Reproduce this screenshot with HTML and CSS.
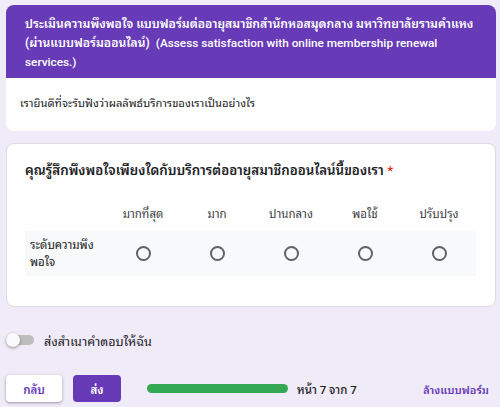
FILE: index.html
```html
<!DOCTYPE html>
<html lang="th">
<head>
<meta charset="utf-8">
<link rel="stylesheet" href="styles.css">
</head>
<body>
<div class="page">
  <div class="card header-card">
    <div class="header-top">
      <span class="line">ประเมินความพึงพอใจ แบบฟอร์มต่ออายุสมาชิกสำนักหอสมุดกลาง มหาวิทยาลัยรามคำแหง</span>
      <span class="line">(ผ่านแบบฟอร์มออนไลน์)&nbsp; <span class="en">(Assess satisfaction with online membership renewal</span></span>
      <span class="line"><span class="en">services.)</span></span>
    </div>
    <div class="header-desc">เรายินดีที่จะรับฟังว่าผลลัพธ์บริการของเราเป็นอย่างไร</div>
  </div>

  <div class="card question-card">
    <div class="q-title">คุณรู้สึกพึงพอใจเพียงใดกับบริการต่ออายุสมาชิกออนไลน์นี้ของเรา <span class="req">*</span></div>
    <div class="grid">
      <div class="grid-head">
        <div class="cell label-cell"></div>
        <div class="cell">มากที่สุด</div>
        <div class="cell">มาก</div>
        <div class="cell">ปานกลาง</div>
        <div class="cell">พอใช้</div>
        <div class="cell">ปรับปรุง</div>
      </div>
      <div class="grid-row">
        <div class="cell label-cell">ระดับความพึงพอใจ</div>
        <div class="cell"><span class="radio"></span></div>
        <div class="cell"><span class="radio"></span></div>
        <div class="cell"><span class="radio"></span></div>
        <div class="cell"><span class="radio"></span></div>
        <div class="cell"><span class="radio"></span></div>
      </div>
    </div>
  </div>

  <div class="copy-row">
    <span class="toggle"><span class="knob"></span></span>
    <span class="copy-label">ส่งสำเนาคำตอบให้ฉัน</span>
  </div>

  <div class="footer">
    <button class="btn btn-back">กลับ</button>
    <button class="btn btn-send">ส่ง</button>
    <div class="progress"><div class="progress-fill"></div></div>
    <span class="page-count">หน้า 7 จาก 7</span>
    <span class="clear">ล้างแบบฟอร์ม</span>
  </div>
</div>
</body>
</html>
```

FILE: styles.css
```css
* { box-sizing: border-box; }
html, body { margin: 0; padding: 0; }
body {
  background: #f0ebf8;
  font-family: Roboto, "Noto Sans Thai Looped", "Noto Sans Thai", sans-serif;
  color: #202124;
  width: 500px;
  height: 407px;
  overflow: hidden;
}
.page {
  padding: 5px 4px 0 6px;
}
.card {
  background: #fff;
  border-radius: 8px;
  border: 1px solid #dadce0;
  overflow: hidden;
}
.header-card { border: none; }
.header-top {
  background: #673ab7;
  color: #fff;
  font-size: 12.1px;
  font-weight: 600;
  line-height: 19px;
  padding: 10px 4px 6px 19px;
}
.line {
  display: block;
  white-space: nowrap;
}
.en {
  font-size: 11.8px;
  font-weight: 500;
}
.header-desc {
  font-size: 11.2px;
  line-height: 16px;
  padding: 18px 14px 19px 14px;
}
.question-card {
  margin-top: 12px;
  padding: 17px 19px 29px 18px;
  height: 164px;
}
.q-title {
  font-size: 13.3px;
  font-weight: 600;
  line-height: 20px;
}
.req { color: #d93025; }
.grid { margin-top: 23px; }
.grid-head, .grid-row {
  display: grid;
  grid-template-columns: 81px repeat(5, 74px);
}
.grid-head {
  font-size: 11.5px;
  color: #3c4043;
  height: 18px;
  align-items: center;
}
.grid-row {
  margin-top: 9px;
  background: #f8f9fa;
  height: 45px;
  align-items: center;
}
.cell {
  text-align: center;
  display: flex;
  justify-content: center;
  align-items: center;
}
.label-cell {
  justify-content: flex-start;
  text-align: left;
  font-size: 11.5px;
  line-height: 17px;
  padding-left: 5px;
  padding-right: 8px;
}
.radio {
  width: 15px;
  height: 15px;
  border: 2px solid #5f6368;
  border-radius: 50%;
  display: block;
}
.copy-row {
  display: flex;
  align-items: center;
  margin-top: 23px;
  height: 20px;
}
.toggle {
  position: relative;
  width: 28px;
  height: 10px;
  border-radius: 5px;
  background: #bdbdbd;
  display: block;
}
.knob {
  position: absolute;
  left: 0;
  top: -2px;
  width: 14px;
  height: 14px;
  border-radius: 50%;
  background: #fafafa;
  box-shadow: 0 1px 3px rgba(0,0,0,0.4);
}
.copy-label {
  margin-left: 10px;
  font-size: 12.5px;
}
.footer {
  display: flex;
  align-items: center;
  margin-top: 25px;
}
.btn {
  font-family: inherit;
  border: none;
  border-radius: 4px;
  height: 27px;
  font-size: 11.5px;
  font-weight: 600;
  padding: 0;
}
.btn-back {
  width: 56px;
  background: #fff;
  color: #673ab7;
  box-shadow: 0 1px 2px rgba(60,64,67,0.3), 0 1px 3px 1px rgba(60,64,67,0.15);
}
.btn-send {
  width: 48px;
  margin-left: 11px;
  background: #673ab7;
  color: #fff;
}
.progress {
  margin-left: 26px;
  width: 141px;
  height: 9px;
  border-radius: 5px;
  background: #34a853;
}
.progress-fill { width: 100%; height: 100%; }
.page-count {
  margin-left: 9px;
  font-size: 11.5px;
  font-weight: 500;
}
.clear {
  margin-left: auto;
  margin-right: 7px;
  font-size: 11px;
  font-weight: 600;
  color: #673ab7;
}
```
